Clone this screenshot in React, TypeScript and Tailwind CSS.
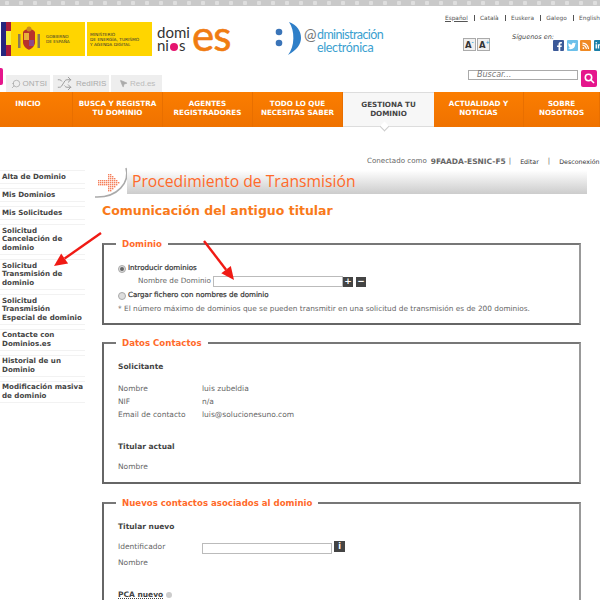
import React from "react";
import { FaFacebookF, FaTwitter, FaRss, FaLinkedinIn } from "react-icons/fa";
import { Search, Shuffle, MousePointer2 } from "lucide-react";

const menu: { t: string[]; h: number }[] = [
  { t: ["Alta de Dominio"], h: 14 },
  { t: ["Mis Dominios"], h: 14 },
  { t: ["Mis Solicitudes"], h: 14 },
  { t: ["Solicitud", "Cancelación de", "dominio"], h: 31 },
  { t: ["Solicitud", "Transmisión de", "dominio"], h: 31 },
  { t: ["Solicitud", "Transmisión", "Especial de dominio"], h: 31 },
  { t: ["Contacte con", "Dominios.es"], h: 22 },
  { t: ["Historial de un", "Dominio"], h: 22 },
  { t: ["Modificación masiva", "de dominio"], h: 22 },
];

const nav: { a: string; b?: string; w: string; active?: boolean }[] = [
  { a: "INICIO", w: "w-[73px] pr-[16px]" },
  { a: "BUSCA Y REGISTRA", b: "TU DOMINIO", w: "w-[90px]" },
  { a: "AGENTES", b: "REGISTRADORES", w: "w-[90px]" },
  { a: "TODO LO QUE", b: "NECESITAS SABER", w: "w-[90px]" },
  { a: "GESTIONA TU", b: "DOMINIO", w: "w-[91px]", active: true },
  { a: "ACTUALIDAD Y", b: "NOTICIAS", w: "w-[90px]" },
  { a: "SOBRE", b: "NOSOTROS", w: "w-[76px]" },
];

const dots: [number, number][] = [];
for (let r = 0; r < 9; r++) {
  const dy = Math.abs(r - 4);
  for (let c = 0; c < 11; c++) {
    const inShaft = dy <= 1 && c < 7;
    const inHead = c >= 5 && c + dy <= 10 && dy <= 4;
    if (inShaft || inHead) dots.push([-4 + c * 2, 5 + r * 2]);
  }
}

function Arrow({ x1, y1, x2, y2 }: { x1: number; y1: number; x2: number; y2: number }) {
  const a = Math.atan2(y2 - y1, x2 - x1);
  const L = 13;
  const W = 6;
  const bx = x2 - L * Math.cos(a);
  const by = y2 - L * Math.sin(a);
  const px = -Math.sin(a) * W;
  const py = Math.cos(a) * W;
  return (
    <g>
      <line x1={x1} y1={y1} x2={bx} y2={by} stroke="#f01a14" strokeWidth="2.4" />
      <polygon points={`${x2},${y2} ${bx + px},${by + py} ${bx - px},${by - py}`} fill="#f01a14" />
    </g>
  );
}

function Box({ title, className, children }: { title: string; className?: string; children: React.ReactNode }) {
  return (
    <fieldset className={`w-[479px] border-2 border-[#999] border-t-[#777] border-b-[#666] border-l-[#666] pl-[14px] ${className ?? ""}`}>
      <legend className="-ml-[2px] px-[6px] text-[8.6px] font-bold leading-[12px] text-[#ff6a2a]">{title}</legend>
      {children}
    </fieldset>
  );
}

function Row({ k, v }: { k: string; v?: string }) {
  return (
    <div className="flex h-[13px] items-center">
      <span className="w-[84px]">{k}</span>
      {v && <span>{v}</span>}
    </div>
  );
}

const sep = <span className="mx-[6px] h-[6px] w-px bg-[#555]" />;

export default function App() {
  return (
    <div className="relative h-[600px] w-[600px] overflow-hidden bg-white font-['DejaVu_Sans',sans-serif] text-[7.5px] text-[#666]">
      <div className="h-[6px] bg-[#c9c9c9] bg-[radial-gradient(circle,#dedede_2px,transparent_2.5px)] bg-[length:14px_6px]" />

      {/* Header */}
      <div className="flex h-[69px] items-start">
        <div className="ml-[1px] mt-[16px] flex h-[34px] w-[84px] bg-[#ffd500]">
          <div className="flex w-[10px]">
            <div className="w-[5px] bg-[#26267e]" />
            <div className="flex w-[5px] flex-col">
              <div className="h-[9px] bg-[#a81c3c]" />
              <div className="h-[14px] bg-[#f7f03a]" />
              <div className="h-[11px] bg-[#a81c3c]" />
            </div>
          </div>
          <svg width="24" height="34" viewBox="0 0 24 34" className="ml-[6px]">
            <path d="M6 10 C8 6 16 6 18 10 L18 21 C17 26 13 27 12 28 C11 27 7 26 6 21 Z" fill="#b8332b" />
            <rect x="7" y="11" width="5" height="7" fill="#e8b23a" />
            <rect x="12" y="18" width="5" height="6" fill="#8c4a8c" />
            <rect x="1" y="12" width="2.5" height="14" fill="#8a7a5a" />
            <rect x="20.5" y="12" width="2.5" height="14" fill="#8a7a5a" />
            <circle cx="12" cy="7" r="2.5" fill="#c98a20" />
          </svg>
          <div className="ml-[5px] mt-[13px] text-[4.2px] leading-[4.5px] text-[#333]">GOBIERNO<br />DE ESPAÑA</div>
        </div>
        <div className="ml-[2px] mt-[16px] h-[34px] w-[65px] bg-[#ffd500] pl-[3px] pt-[10px] text-[4.3px] leading-[5px] text-[#333]">
          MINISTERIO<br />DE ENERGÍA, TURISMO<br />Y AGENDA DIGITAL
        </div>
        <div className="ml-[5px] mt-[20px] flex h-[28px] w-[31px] flex-col font-['Lato',sans-serif] text-[15px] leading-[13px] text-[#333]">
          <span>domi</span>
          <span className="flex items-center">ni<span className="mx-[1px] mt-[2px] inline-block h-[8px] w-[8px] rounded-full bg-[#e5156f]" />s</span>
        </div>
        <div className="ml-[4px] mt-[7px] w-[36px] font-['Lato',sans-serif] text-[42px] leading-[44px] tracking-[-1px] text-[#f07c12] [-webkit-text-stroke:0.6px]">es</div>

        <svg width="28" height="36" viewBox="0 0 28 36" className="ml-[46px] mt-[16px]">
          <circle cx="5" cy="10" r="3.3" fill="#3a74b8" />
          <circle cx="5" cy="21" r="3.3" fill="#3a74b8" />
          <path d="M15 0 C21 8 21 25 14 33 C23 28 27 22 27 16 C27 9 23 3 15 0Z" fill="#2f7fc8" />
        </svg>
        <div className="ml-[2px] mt-[22px] flex font-['Lato',sans-serif] text-[#3b9fd0]">
          <span className="w-[13px] text-[15px] leading-[13px] text-[#777]">@</span>
          <div className="flex flex-col text-[12.5px] leading-[13px]">
            <span className="tracking-[-0.6px]">dministración</span>
            <span className="tracking-[-0.35px]">electrónica</span>
          </div>
        </div>

        <div className="ml-auto flex w-[161px] flex-col">
          <div className="mt-[8px] flex h-[8px] items-center pl-[6px] text-[5.8px] text-[#555]">
            <span className="underline">Español</span>
            {sep}
            <span>Català</span>
            {sep}
            <span>Euskera</span>
            {sep}
            <span>Galego</span>
            {sep}
            <span className="whitespace-nowrap">English</span>
          </div>
          <div className="flex">
            <div className="ml-[24px] mt-[16px] flex gap-[1px]">
              <div className="flex h-[13px] w-[13px] items-end border border-[#aaa] bg-[#f0f0f0] pl-[1px] text-[8.5px] font-bold leading-[10px] text-[#333]">
                <span>A</span><span className="mb-[5px] text-[5px] leading-[5px] text-[#2a9fd8]">-</span>
              </div>
              <div className="flex h-[13px] w-[13px] items-end border border-[#aaa] bg-[#f0f0f0] pl-[1px] text-[8.5px] font-bold leading-[10px] text-[#333]">
                <span>A</span><span className="mb-[5px] text-[5px] leading-[5px] text-[#2a9fd8]">+</span>
              </div>
            </div>
            <div className="ml-[22px] mt-[11px]">
              <div className="whitespace-nowrap text-[6.5px] italic leading-[8px] text-[#444]">Síguenos en:</div>
              <div className="-mt-px ml-[41px] flex w-[60px] gap-[2.5px] text-white">
                <div className="flex h-[11px] w-[11px] shrink-0 items-end justify-end rounded-[1px] bg-[#3b5998] text-[9px]"><FaFacebookF /></div>
                <div className="flex h-[11px] w-[11px] shrink-0 items-center justify-center rounded-[1px] bg-[#6cc0ea] text-[8px]"><FaTwitter /></div>
                <div className="flex h-[11px] w-[11px] shrink-0 items-center justify-center rounded-[1px] bg-[#f08a24] text-[7.5px]"><FaRss /></div>
                <div className="flex h-[11px] w-[11px] shrink-0 items-center justify-center rounded-[1px] bg-[#1a7fa8] text-[7.5px]"><FaLinkedinIn /></div>
              </div>
            </div>
          </div>
        </div>
      </div>

      {/* Tabs and search */}
      <div className="flex h-[17px] items-start font-['Liberation_Sans',sans-serif] text-[8px]">
        <div className="-mt-[7px] h-[17px] w-[3px] rounded-r-[2px] bg-[#e5168c]" />
        <div className="ml-[3px] flex h-[17px] w-[44px] items-center bg-[#eee] pl-[5px] text-[#aaa]">
          <Search size={10} strokeWidth={1.5} className="-scale-x-100 text-[#999]" /><span className="ml-[1.5px]">ONTSI</span>
        </div>
        <div className="ml-[3px] flex h-[17px] w-[56px] items-center bg-[#eee] pl-[4px] text-[#aaa]">
          <Shuffle size={15} strokeWidth={1.5} className="text-[#999]" /><span className="ml-[4px]">RedIRIS</span>
        </div>
        <div className="ml-[2px] flex h-[17px] w-[51px] items-center bg-[#eee] pl-[8px] text-[#bbb]">
          <MousePointer2 size={9} fill="#aaa" className="text-[#aaa]" /><span className="ml-[2px]">Red.es</span>
        </div>
        <div className="-mt-[5px] ml-auto flex items-start">
          <div className="h-[10px] w-[110px] border border-[#aaa] bg-white pl-[8px] font-['DejaVu_Sans',sans-serif] text-[8px] italic leading-[8px] text-[#777]">Buscar...</div>
          <div className="ml-[3px] mr-[3px] flex h-[17px] w-[16px] items-center justify-center rounded-[2px] bg-[#e5168c]">
            <svg width="11" height="11" viewBox="0 0 11 11" fill="none" stroke="white" strokeWidth="1.6"><circle cx="4.5" cy="4.5" r="3.2" /><path d="M7 7l3 3" /></svg>
          </div>
        </div>
      </div>

      {/* Nav */}
      <div className="flex h-[35px] bg-gradient-to-b from-[#fb7d00] to-[#ef7200] text-center text-[7.2px] font-bold leading-[9px] text-white">
        {nav.map((n) => (
          <div key={n.a} className={`${n.w} relative shrink-0 pt-[7px] ${n.active ? "border-y border-[#ddd] bg-[#f7f7f7] text-[#444]" : "border-r border-[#e86f00]"}`}>
            {n.a}
            {n.b && <br />}
            {n.b}
            {n.active && <span className="absolute bottom-[-4px] left-[38px] h-[7px] w-[7px] rotate-45 border-b border-r border-[#ccc] bg-white" />}
          </div>
        ))}
      </div>

      {/* Body */}
      <div className="flex">
        <aside className="flex w-[85px] shrink-0 flex-col gap-[4px] pt-[43px] text-[7.1px] font-bold leading-[8.6px] text-[#444]">
          {menu.map((m) => (
            <div key={m.t.join()} className="flex flex-col justify-center whitespace-nowrap border-y border-[#f2f2f2] pl-[2px]" style={{ height: m.h }}>
              {m.t.map((l) => <div key={l}>{l}</div>)}
            </div>
          ))}
        </aside>

        <main className="w-[515px] pl-[17px]">
          <div className="mt-[30px] flex h-[9px] items-center whitespace-nowrap pl-[265px] text-[7.1px] text-[#666]">
            Conectado como <span className="ml-[4px] text-[7.5px] font-bold">9FAADA-ESNIC-F5</span>
            <span className="ml-[3px]">|</span>
            <span className="ml-[9px] text-[6.3px] text-[#333]">Editar</span>
            <span className="ml-[9px]">|</span>
            <span className="ml-[9px] text-[6.3px] text-[#333]">Desconexión</span>
          </div>

          <div className="mt-[3px] flex h-[26px] w-[485px] items-center">
            <svg width="25" height="26" viewBox="0 0 25 26" className="shrink-0 overflow-visible">
              {dots.map(([x, y]) => <rect key={`${x}-${y}`} x={x} y={y} width="1.4" height="1.4" fill="#f4815c" />)}
              <path d="M24 -1 C28 13 16 29 -7 28" fill="none" stroke="#aaa" strokeWidth="1.5" />
            </svg>
            <div className="flex h-[24px] flex-1 items-center bg-gradient-to-b from-white to-[#cccccc] pl-[5px] font-['Open_Sans',sans-serif] text-[15.7px] text-[#ff6a2a]">
              Procedimiento de Transmisión
            </div>
          </div>

          <h1 className="mt-[8px] text-[12.5px] font-bold leading-[16px] text-[#f97a1a]">Comunicación del antiguo titular</h1>

          <Box title="Dominio" className="mt-[19px] h-[87px]">
            <div className="mt-[14px] flex h-[9px] items-center text-[7.1px] text-[#333] [-webkit-text-stroke:0.2px]">
              <span className="mr-[2px] flex h-[8px] w-[8px] items-center justify-center rounded-full border border-[#aaa] bg-[#ddd]"><span className="h-[4px] w-[4px] rounded-full bg-[#666]" /></span>
              Introducir dominios
            </div>
            <div className="mt-[3px] flex h-[11px] items-center pl-[20px] text-[7.3px]">
              <span className="w-[75px] whitespace-nowrap">Nombre de Dominio</span>
              <span className="h-[11px] w-[130px] border border-[#bbb] bg-white" />
              <span className="flex h-[10px] w-[10px] items-center justify-center bg-[#444] text-[9px] font-bold leading-none text-white">+</span>
              <span className="ml-[3px] flex h-[10px] w-[10px] items-center justify-center bg-[#444] text-[9px] font-bold leading-none text-white">−</span>
            </div>
            <div className="mt-[4px] flex h-[9px] items-center text-[7.1px] text-[#333] [-webkit-text-stroke:0.2px]">
              <span className="mr-[2px] h-[8px] w-[8px] rounded-full border border-[#aaa] bg-[#ddd]" />
              Cargar fichero con nombres de dominio
            </div>
            <div className="mt-[4px] whitespace-nowrap text-[7.35px] leading-[9px]">* El número máximo de dominios que se pueden transmitir en una solicitud de transmisión es de 200 dominios.</div>
          </Box>

          <Box title="Datos Contactos" className="mt-[12px] h-[147px]">
            <div className="mt-[13px] font-bold leading-[10px] text-[#444]">Solicitante</div>
            <div className="mt-[10px] flex flex-col">
              <Row k="Nombre" v="luis zubeldia" />
              <Row k="NIF" v="n/a" />
              <Row k="Email de contacto" v="luis@solucionesuno.com" />
            </div>
            <div className="mt-[21px] font-bold leading-[10px] text-[#444]">Titular actual</div>
            <div className="mt-[8px]"><Row k="Nombre" /></div>
          </Box>

          <Box title="Nuevos contactos asociados al dominio" className="mt-[13px] h-[150px]">
            <div className="mt-[13px] font-bold leading-[10px] text-[#444]">Titular nuevo</div>
            <div className="mt-[8px] flex h-[13px] items-center">
              <span className="w-[84px]">Identificador</span>
              <span className="mt-[3px] h-[11px] w-[130px] self-start border border-[#bbb] bg-white" />
              <span className="ml-[2px] mt-[1px] flex h-[11px] w-[11px] items-center justify-center self-start bg-[#444] text-[8px] font-bold text-white">i</span>
            </div>
            <div className="mt-[3px]"><Row k="Nombre" /></div>
            <div className="mt-[21px] flex items-center font-bold leading-[10px] text-[#444]">
              <span className="underline decoration-dotted">PCA nuevo</span>
              <span className="ml-[3px] h-[6px] w-[6px] rounded-full bg-[#ccc]" />
            </div>
          </Box>
        </main>
      </div>

      <svg width="600" height="600" className="pointer-events-none absolute left-0 top-0">
        <Arrow x1={101} y1={233} x2={54} y2={266} />
        <Arrow x1={204} y1={241} x2={234} y2={280} />
      </svg>
    </div>
  );
}
